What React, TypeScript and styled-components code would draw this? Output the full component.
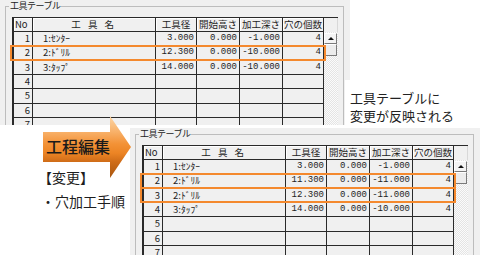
import React from 'react';
import styled, { createGlobalStyle } from 'styled-components';

const GlobalStyle = createGlobalStyle`
  html, body { margin: 0; padding: 0; background: #ffffff; }
  body { font-family: "Noto Sans CJK JP", "Noto Sans", sans-serif; }
`;

const ROW_H = 43 / 3;
const COLS = '19px 123px 41px 43px 43px 41px 14px';
const LINE = '#2a2a2a';

type Align = 'left' | 'right' | 'center';

const Stage = styled.div`
  position: relative;
  width: 480px;
  height: 255px;
  overflow: hidden;
  background: #ffffff;
  display: flex;
  flex-direction: column;
  gap: 3px;
`;

const TopRow = styled.div`
  display: flex;
  height: 125px;
`;

const BottomRow = styled.div`
  display: flex;
  height: 127px;
`;

const Window = styled.div`
  position: relative;
  flex: none;
  width: 350px;
  height: 100%;
  box-sizing: border-box;
  padding-left: 5px;
  background: #f0f0f0;
  overflow: hidden;
`;

const GroupBox = styled.fieldset`
  margin: 1px 0 0 0;
  padding: 6px 0 0 6px;
  width: 339px;
  height: 160px;
  box-sizing: border-box;
  min-width: 0;
  border: 1px solid #bdbdbd;
`;

const GroupLabel = styled.legend`
  margin-left: -3px;
  padding: 0 1px;
  font-size: 9px;
  line-height: 10px;
  letter-spacing: -0.5px;
  color: #222;
`;

const Grid = styled.div`
  display: grid;
  grid-template-columns: ${COLS};
  grid-template-rows: 14px repeat(7, ${ROW_H}px);
  width: max-content;
  border-top: 1px solid ${LINE};
  border-left: 2px solid ${LINE};
`;

const Cell = styled.div<{ $align: Align; $mono?: boolean; $head?: boolean; $pad?: number; $spread?: boolean }>`
  box-sizing: border-box;
  display: flex;
  align-items: center;
  justify-content: ${p => (p.$align === 'left' ? 'flex-start' : p.$align === 'right' ? 'flex-end' : 'center')};
  padding: 0 2px 0 ${p => p.$pad ?? 2}px;
  border-right: 1px solid ${LINE};
  border-bottom: 1px solid ${LINE};
  background: #f0f0f0;
  box-shadow: ${p => (p.$head ? 'inset 1px 1px 0 #ffffff' : 'none')};
  font-family: ${p => (p.$mono ? '"Liberation Mono", "DejaVu Sans Mono", monospace' : '"Noto Sans CJK JP", sans-serif')};
  font-size: ${p => (p.$mono ? '9px' : '9.5px')};
  letter-spacing: ${p => (p.$spread ? '2.5px' : '0')};
  line-height: 1;
  color: #1e1e1e;
  white-space: pre;
  overflow: hidden;
`;

const HeadSpacer = styled.div`
  background: #f0f0f0;
  border-right: 1px solid #d8d8d8;
`;

const Scrollbar = styled.div`
  grid-column: 7;
  grid-row: 2 / span 7;
  display: flex;
  flex-direction: column;
  padding-top: 1px;
  background: repeating-conic-gradient(#e4e4e4 0 25%, #fbfbfb 0 50%) 0 0 / 2px 2px;
`;

const ScrollButton = styled.div`
  height: 11px;
  margin-right: 1px;
  box-sizing: border-box;
  display: flex;
  align-items: center;
  justify-content: center;
  background: #f4f4f4;
  border-top: 1px solid #ffffff;
  border-left: 1px solid #ffffff;
  border-right: 1px solid #7a7a7a;
  border-bottom: 1px solid #7a7a7a;
`;

const ScrollThumb = styled(ScrollButton)`
  height: 12px;
  background: #ececec;
`;

const UpGlyph = styled.div`
  width: 0;
  height: 0;
  border-left: 3px solid transparent;
  border-right: 3px solid transparent;
  border-bottom: 3px solid #111;
`;

const Highlight = styled.div<{ $row: number }>`
  position: absolute;
  left: 10px;
  top: ${p => 30.5 + (p.$row - 1) * ROW_H}px;
  width: 316px;
  height: ${ROW_H + 2}px;
  box-sizing: border-box;
  border: 2px solid #f4892e;
  pointer-events: none;
`;

const Caption = styled.div`
  position: relative;
  z-index: 1;
  flex: none;
  align-self: flex-end;
  margin-left: -5px;
  padding: 9px 0 0 5px;
  background: #ffffff;
  font-size: 13px;
  line-height: 18px;
  color: #222;
  white-space: nowrap;
`;

const ChangeNote = styled.div`
  flex: none;
  width: 130px;
  box-sizing: border-box;
  padding: 38px 0 0 38px;
  font-size: 14px;
  line-height: 23.5px;
  color: #1e1e1e;
`;

const NoteLine = styled.div<{ $indent?: boolean }>`
  padding-left: ${p => (p.$indent ? 3 : 0)}px;
  white-space: nowrap;
`;

const ProcessArrow = styled.div`
  position: absolute;
  z-index: 2;
  left: 40px;
  top: 105px;
  width: 95px;
  height: 75px;
  box-sizing: border-box;
  padding: 33px 0 0 6px;
`;

const ArrowShape = styled.svg`
  position: absolute;
  left: 0;
  top: 0;
`;

const ArrowLabel = styled.div`
  position: relative;
  font-size: 16px;
  line-height: 16px;
  font-weight: 500;
  color: #1a1a1a;
  white-space: nowrap;
`;

const HEADERS: { text: string; align: Align; pad?: number; spread?: boolean }[] = [
  { text: 'No', align: 'left', pad: 1 },
  { text: '工 具 名', align: 'center', spread: true },
  { text: '工具径', align: 'center' },
  { text: '開始高さ', align: 'center' },
  { text: '加工深さ', align: 'center' },
  { text: '穴の個数', align: 'center' },
];

const topRows: string[][] = [
  ['1', '1:ｾﾝﾀｰ', '3.000', '0.000', '-1.000', '4'],
  ['2', '2:ﾄﾞﾘﾙ', '12.300', '0.000', '-10.000', '4'],
  ['3', '3:ﾀｯﾌﾟ', '14.000', '0.000', '-10.000', '4'],
  ['4'],
  ['5'],
  ['6'],
  ['7'],
];

const bottomRows: string[][] = [
  ['1', '1:ｾﾝﾀｰ', '3.000', '0.000', '-1.000', '4'],
  ['2', '2:ﾄﾞﾘﾙ', '11.300', '0.000', '-11.000', '4'],
  ['3', '2:ﾄﾞﾘﾙ', '12.300', '0.000', '-11.000', '4'],
  ['4', '3:ﾀｯﾌﾟ', '14.000', '0.000', '-10.000', '4'],
  ['5'],
  ['6'],
  ['7'],
];

function ToolWindow({ rows, highlights }: { rows: string[][]; highlights: number[] }) {
  return (
    <Window>
      <GroupBox>
        <GroupLabel>工具テーブル</GroupLabel>
        <Grid>
          {HEADERS.map(h => (
            <Cell key={h.text} $head $align={h.align} $pad={h.pad} $spread={h.spread}>
              {h.text}
            </Cell>
          ))}
          <HeadSpacer />
          {rows.map((r, i) => (
            <React.Fragment key={i}>
              <Cell $align="right">{r[0]}</Cell>
              <Cell $align="left" $pad={10}>{r[1] ?? ''}</Cell>
              <Cell $align="right" $mono>{r[2] ?? ''}</Cell>
              <Cell $align="right" $mono>{r[3] ?? ''}</Cell>
              <Cell $align="right" $mono>{r[4] ?? ''}</Cell>
              <Cell $align="right" $mono>{r[5] ?? ''}</Cell>
            </React.Fragment>
          ))}
          <Scrollbar>
            <ScrollButton>
              <UpGlyph />
            </ScrollButton>
            <ScrollThumb />
          </Scrollbar>
        </Grid>
      </GroupBox>
      {highlights.map(r => (
        <Highlight key={r} $row={r} />
      ))}
    </Window>
  );
}

export default function App() {
  return (
    <>
      <GlobalStyle />
      <Stage>
        <TopRow>
          <ToolWindow rows={topRows} highlights={[2]} />
          <Caption>
            工具テーブルに
            <br />
            変更が反映される
          </Caption>
        </TopRow>
        <BottomRow>
          <ChangeNote>
            <NoteLine>【変更】</NoteLine>
            <NoteLine $indent>・穴加工手順</NoteLine>
          </ChangeNote>
          <ToolWindow rows={bottomRows} highlights={[2, 3]} />
        </BottomRow>
        <ProcessArrow>
          <ArrowShape width="95" height="75" viewBox="0 0 95 75">
            <defs>
              <linearGradient id="arrowFill" x1="0" y1="0" x2="0" y2="1">
                <stop offset="0" stopColor="#fcd6a6" />
                <stop offset="0.26" stopColor="#f8b068" />
                <stop offset="0.45" stopColor="#f39236" />
                <stop offset="0.6" stopColor="#ec8424" />
                <stop offset="0.74" stopColor="#cf6c18" />
                <stop offset="1" stopColor="#a8560f" />
              </linearGradient>
            </defs>
            <polygon points="3,27 70,27 70,11 91,42 70,73 70,57 3,57" fill="url(#arrowFill)" />
          </ArrowShape>
          <ArrowLabel>工程編集</ArrowLabel>
        </ProcessArrow>
      </Stage>
    </>
  );
}
